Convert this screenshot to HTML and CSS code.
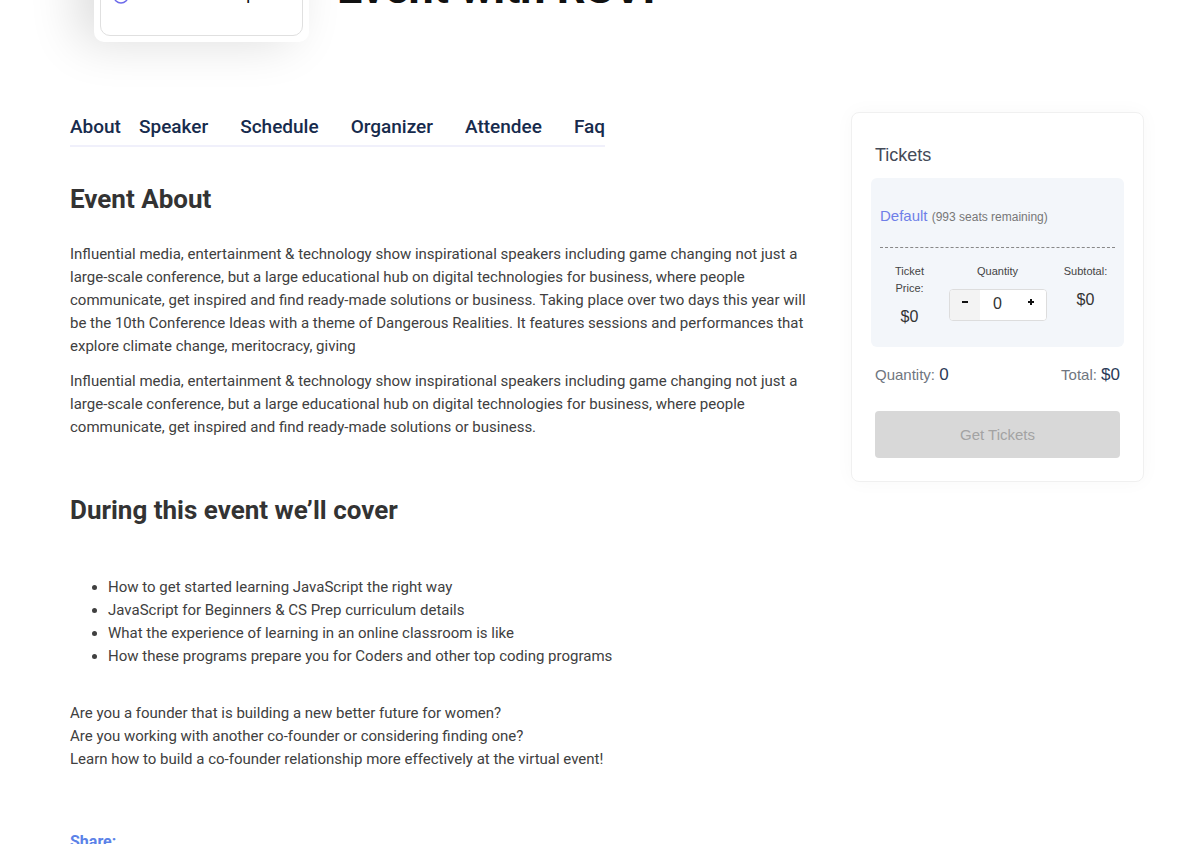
FILE: index.html
```html
<!DOCTYPE html>
<html lang="en">
<head>
    <meta charset="UTF-8">
    <meta name="viewport" content="width=device-width, initial-scale=1.0">
    <title>Event with RSVP</title>
    <link rel="stylesheet" href="styles.css">
</head>
<body>
    <header class="hero">
        <div class="date-card">
            <div class="date-card-inner">
                <svg class="clock" viewBox="0 0 16 16" width="16" height="16" aria-hidden="true">
                    <circle cx="8" cy="8" r="7" fill="none" stroke="#6d6bea" stroke-width="1.5"/>
                    <path d="M8 4v4l3 2" fill="none" stroke="#6d6bea" stroke-width="1.5"/>
                </svg>
                <span>10:00 am - 12:00 pm</span>
            </div>
        </div>
        <h1>Event with RSVP</h1>
    </header>

    <div class="container">
        <main>
            <nav class="tabs">
                <a href="#about">About</a>
                <a href="#speaker">Speaker</a>
                <a href="#schedule">Schedule</a>
                <a href="#organizer">Organizer</a>
                <a href="#attendee">Attendee</a>
                <a href="#faq">Faq</a>
            </nav>

            <section id="about">
                <h2>Event About</h2>
                <p>Influential media, entertainment &amp; technology show inspirational speakers including game changing not just a large-scale conference, but a large educational hub on digital technologies for business, where people communicate, get inspired and find ready-made solutions or business. Taking place over two days this year will be the 10th Conference Ideas with a theme of Dangerous Realities. It features sessions and performances that explore climate change, meritocracy, giving</p>
                <p>Influential media, entertainment &amp; technology show inspirational speakers including game changing not just a large-scale conference, but a large educational hub on digital technologies for business, where people communicate, get inspired and find ready-made solutions or business.</p>
            </section>

            <section class="cover">
                <h2>During this event we’ll cover</h2>
                <ul>
                    <li>How to get started learning JavaScript the right way</li>
                    <li>JavaScript for Beginners &amp; CS Prep curriculum details</li>
                    <li>What the experience of learning in an online classroom is like</li>
                    <li>How these programs prepare you for Coders and other top coding programs</li>
                </ul>
                <p>Are you a founder that is building a new better future for women?<br>
                Are you working with another co-founder or considering finding one?<br>
                Learn how to build a co-founder relationship more effectively at the virtual event!</p>
            </section>

            <div class="share">Share:</div>
        </main>

        <aside>
            <form class="tickets">
                <h3>Tickets</h3>
                <div class="ticket">
                    <div class="ticket-name">Default <small>(993 seats remaining)</small></div>
                    <div class="ticket-row">
                        <div class="cell price">
                            <span>Ticket Price:</span>
                            <strong>$0</strong>
                        </div>
                        <div class="cell">
                            <label for="qty">Quantity</label>
                            <div class="stepper">
                                <button type="button" class="minus" aria-label="Decrease">
                                    <svg viewBox="0 0 8 8" width="8" height="8"><path d="M1 4h6" stroke="#111" stroke-width="2"/></svg>
                                </button>
                                <input type="text" id="qty" value="0">
                                <button type="button" class="plus" aria-label="Increase">
                                    <svg viewBox="0 0 8 8" width="8" height="8"><path d="M1 4h6M4 1v6" stroke="#111" stroke-width="2"/></svg>
                                </button>
                            </div>
                        </div>
                        <div class="cell">
                            <span>Subtotal:</span>
                            <strong>$0</strong>
                        </div>
                    </div>
                </div>
                <div class="totals">
                    <div>Quantity: <b>0</b></div>
                    <div>Total: <b>$0</b></div>
                </div>
                <button type="submit" class="get-tickets" disabled>Get Tickets</button>
            </form>
        </aside>
    </div>
</body>
</html>
```
FILE: styles.css
```css
*{
    box-sizing: border-box;
}
body{
    margin: 0;
    background: #fff;
    color: #404040;
    font: 15px/23px Roboto, sans-serif;
    overflow: hidden;
}
h1, h2, h3, p, ul{
    margin: 0;
}

/* hero, scrolled up under the top of the window */
.hero{
    display: flex;
    gap: 28px;
    margin-top: -100px;
    padding: 0 56px 0 94px;
}
.date-card{
    width: 215px;
    padding: 6px;
    border-radius: 10px;
    background: #fff;
    box-shadow: -16px 0 50px rgba(0, 0, 0, 0.14);
}
.date-card-inner{
    display: flex;
    align-items: flex-end;
    gap: 8px;
    height: 130px;
    padding: 0 12px 31px;
    border: 1px solid #e0e0e0;
    border-radius: 10px;
    color: #111;
    font-size: 14px;
    font-weight: 500;
    line-height: 18px;
}
.clock{
    flex: none;
}
.hero h1{
    padding-top: 58px;
    color: #111;
    font-size: 45px;
    line-height: 60px;
    font-weight: 700;
}

.container{
    display: grid;
    grid-template-columns: 1fr 293px;
    gap: 40px;
    align-items: start;
    padding: 70px 56px 0 70px;
}

/* tabs */
.tabs{
    display: flex;
    gap: 32px;
    width: max-content;
    padding-bottom: 3px;
    border-bottom: 2px solid #f0f0fb;
}
.tabs a{
    color: #172b4d;
    font-size: 19px;
    font-weight: 500;
    line-height: 30px;
    text-decoration: none;
}
.tabs a:first-child{
    margin-right: -14px;
}

h2{
    color: #333;
    font-size: 26px;
    font-weight: 700;
    line-height: 36px;
}
#about h2{
    margin: 34px 0 26px;
}
#about p + p{
    margin-top: 12px;
}
.cover{
    margin-top: 53px;
}
.cover ul{
    margin: 48px 0 34px;
    padding-left: 38px;
}
.share{
    margin-top: 59px;
    color: #5b82e8;
    font-size: 16px;
    font-weight: 700;
}

/* tickets */
.tickets{
    padding: 27px 23px 23px;
    border: 1px solid #f0f0f0;
    border-radius: 8px;
    color: #444;
    font-family: "Liberation Sans", sans-serif;
    box-shadow: 0 0 20px rgba(0, 0, 0, 0.03);
}
.tickets h3{
    color: #444a57;
    font-size: 18px;
    font-weight: 400;
    line-height: 30px;
}
.ticket{
    margin: 8px -4px 0;
    padding: 25px 9px 18px;
    border-radius: 6px;
    background: #f3f6fa;
}
.ticket-name{
    padding-bottom: 17px;
    border-bottom: 1px dashed #888;
    color: #6f7fe8;
    font-size: 15px;
    line-height: 26px;
}
.ticket-name small{
    color: #777;
    font-size: 12px;
}
.ticket-row{
    display: grid;
    grid-template-columns: 59px 1fr 59px;
    padding-top: 15px;
}
.cell{
    display: flex;
    flex-direction: column;
    align-items: center;
    font-size: 11px;
    line-height: 17px;
    text-align: center;
}
.price span{
    width: 40px;
}
.cell strong{
    margin-top: 8px;
    color: #333;
    font-size: 16px;
    font-weight: 400;
    line-height: 24px;
}
.stepper{
    display: flex;
    width: 98px;
    height: 32px;
    margin-top: 9px;
    border: 1px solid #ddd;
    border-radius: 4px;
    background: #fff;
    overflow: hidden;
}
.stepper button{
    display: flex;
    justify-content: center;
    width: 30px;
    padding: 8px 0 0;
    border: 0;
    background: #fff;
}
.stepper .minus{
    background: #f3f3f3;
}
.stepper input{
    flex: 1;
    min-width: 0;
    padding: 0 0 2px;
    border: 0;
    color: #333;
    font: 16px "Liberation Sans", sans-serif;
    text-align: center;
}
.totals{
    display: flex;
    justify-content: space-between;
    margin: 15px 0 24px;
    color: #707680;
    font-size: 15px;
    line-height: 25px;
}
.totals b{
    color: #2b3a58;
    font-size: 17px;
    font-weight: 400;
}
.get-tickets{
    display: block;
    width: 100%;
    height: 47px;
    border: 0;
    border-radius: 4px;
    background: #d8d8d8;
    color: #a3a3a3;
    font: 15px "Liberation Sans", sans-serif;
}
```
